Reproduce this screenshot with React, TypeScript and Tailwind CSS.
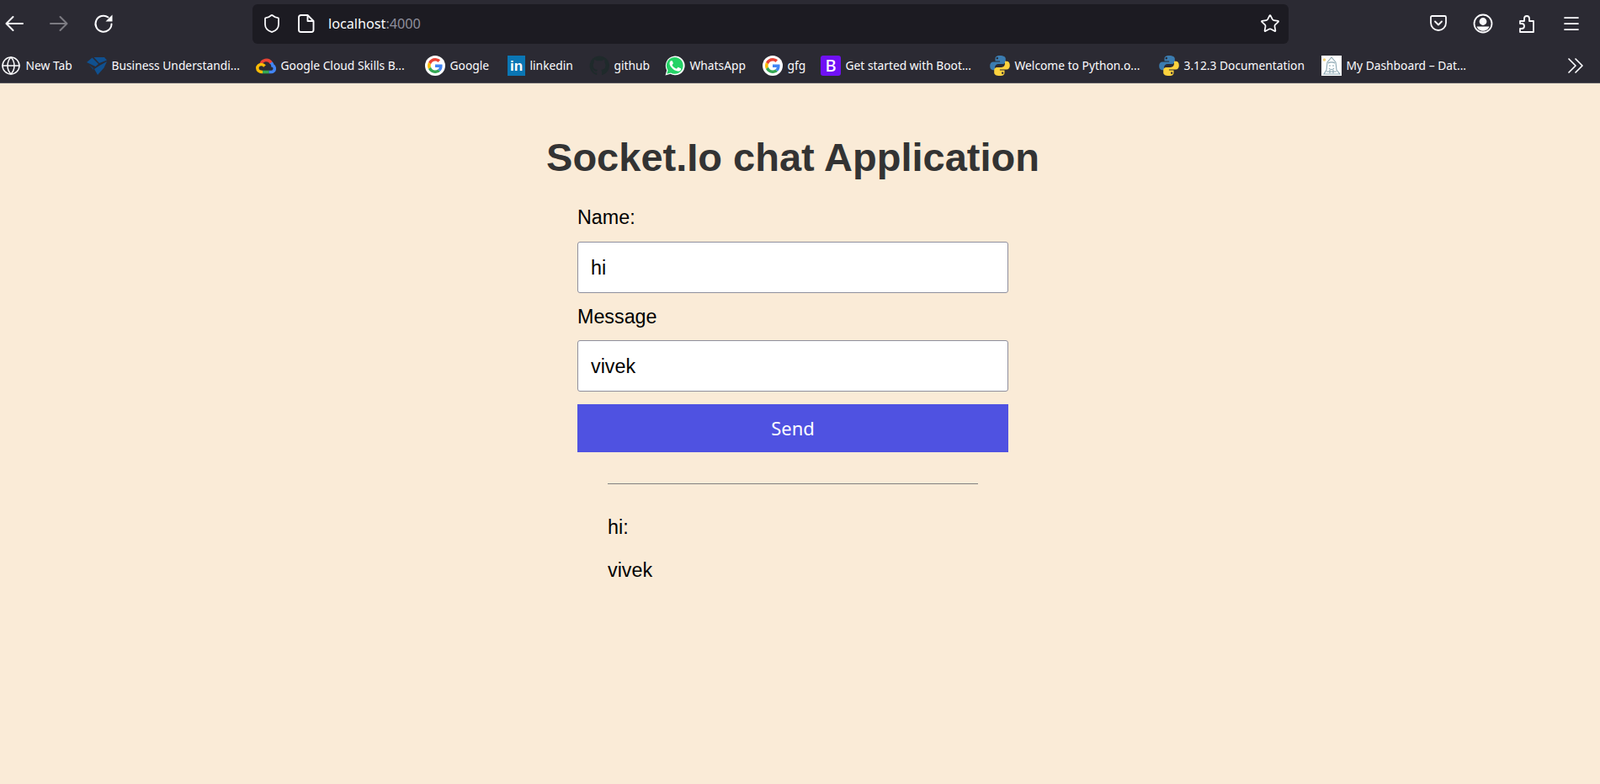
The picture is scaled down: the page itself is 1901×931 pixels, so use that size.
import React from 'react';
import { Shield, Star, Menu, Globe } from 'lucide-react';

const GoogleIcon = () => (
  <div className="w-6 h-6 rounded-full bg-white flex items-center justify-center">
    <svg viewBox="0 0 48 48" className="w-[18px] h-[18px]">
      <path fill="#EA4335" d="M24 9.5c3.5 0 6.7 1.2 9.2 3.6l6.9-6.9C35.9 2.4 30.5 0 24 0 14.6 0 6.5 5.4 2.6 13.2l8 6.2C12.5 13.7 17.8 9.5 24 9.5z" />
      <path fill="#4285F4" d="M46.9 24.5c0-1.6-.1-3.1-.4-4.5H24v9h12.9c-.6 3-2.2 5.5-4.8 7.2l7.7 6c4.5-4.2 7.1-10.300 7.1-17.700z" />
      <path fill="#FBBC05" d="M10.500 28.600c-.5-1.400-.8-3-.8-4.600s.3-3.200.8-4.600l-8-6.200C.9 16.500 0 20.100 0 24s.9 7.500 2.600 10.800l7.900-6.200z" />
      <path fill="#34A853" d="M24 48c6.500 0 11.900-2.100 15.900-5.800l-7.700-6c-2.200 1.500-5 2.300-8.200 2.300-6.200 0-11.500-4.200-13.400-9.900l-8 6.200C6.500 42.600 14.600 48 24 48z" />
    </svg>
  </div>
);

const PythonIcon = () => (
  <svg viewBox="0 0 24 24" className="w-6 h-6">
    <path fill="#3b7cb0" d="M11.800 0C7.700 0 6.500 1.700 6.500 3.800V6.600h5.600v1H4C1.800 7.600.2 9.200.2 12.300c0 3.300 1.500 4.900 3.600 4.900h2.200v-3c0-2.300 1.900-4.100 4.200-4.100h5.400c1.800 0 3.200-1.500 3.200-3.300V3.800C18.800 1.700 16.900 0 11.800 0zM8.800 2c.7 0 1.200.5 1.200 1.200S9.500 4.400 8.800 4.400 7.600 3.900 7.600 3.200 8.100 2 8.800 2z" />
    <path fill="#fdd23e" d="M12.200 24c4.100 0 5.300-1.700 5.300-3.800v-2.800h-5.600v-1H20c2.200 0 3.800-1.600 3.800-4.700 0-3.300-1.500-4.900-3.600-4.900H18v3c0 2.300-1.900 4.100-4.200 4.100H8.400c-1.800 0-3.200 1.500-3.200 3.300v3c0 2.100 1.900 3.800 7 3.800zm3-2c-.7 0-1.200-.5-1.200-1.200s.5-1.200 1.200-1.200 1.200.5 1.200 1.200-.5 1.200-1.200 1.200z" />
  </svg>
);

const bookmarks = [
  {
    label: 'New Tab',
    box: 'w-[103px] pl-[1px]',
    icon: <Globe size={24} strokeWidth={1.5} className="text-[#fbfbfe]" />,
  },
  {
    label: 'Business Understandi...',
    box: 'w-[201px]',
    icon: (
      <svg viewBox="0 0 24 24" className="w-6 h-6">
        <path fill="#10508f" d="M0 8l6.500-5.500L14 10l-3.500 3z" />
        <path fill="#10508f" d="M8.500 2H21l3 3.500L15 9z" />
        <path fill="#10508f" d="M24 7l-3.500 7.500L13 23l-4-7 6-4z" />
        <path fill="#0d4478" d="M2.500 11l5 3.500 1 3z" />
      </svg>
    ),
  },
  {
    label: 'Google Cloud Skills B...',
    box: 'w-[201px]',
    icon: (
      <svg viewBox="0 0 24 24" className="w-6 h-6" fill="none" strokeWidth="3.6">
        <path stroke="#4285f4" d="M17 7.500c2 1.500 3 3.500 3 4.500 2 .5 2.300 2.500 2.300 3.500 0 2.500-2 4-4 4h-3" />
        <path stroke="#ea4335" d="M6 11a6.500 6.500 0 0 1 12-2.500" />
        <path stroke="#34a853" d="M15.500 19.500H8" />
        <path stroke="#fbbc05" d="M8 19.500c-3.500 0-6.200-2-6.200-4.500s2.200-4.500 4.700-4.500c1.500 0 3 .8 4 2" />
      </svg>
    ),
  },
  { label: 'Google', box: 'w-[98px]', icon: <GoogleIcon /> },
  {
    label: 'linkedin',
    box: 'w-[97px]',
    icon: (
      <div className="w-[21px] h-6 bg-[#0a76b4] border-2 border-[#0a76b4] flex items-center justify-center">
        <span className="text-white font-bold text-[17px] leading-none font-['Liberation_Sans',sans-serif]">in</span>
      </div>
    ),
  },
  {
    label: 'github',
    box: 'w-[90px]',
    icon: (
      <svg viewBox="0 0 24 24" className="w-6 h-6">
        <path fill="#1f2a2b" d="M12 .5A11.500 11.500 0 0 0 8.400 22.900c.6.100.8-.2.800-.6v-2c-3.200.7-3.900-1.500-3.900-1.500-.5-1.300-1.300-1.700-1.300-1.700-1-.7.100-.7.100-.7 1.200.1 1.800 1.200 1.800 1.200 1 1.800 2.700 1.300 3.400 1 .1-.8.400-1.300.7-1.600-2.600-.3-5.300-1.300-5.300-5.700 0-1.300.5-2.300 1.200-3.100-.1-.3-.5-1.500.1-3.100 0 0 1-.3 3.200 1.200a11 11 0 0 1 5.800 0c2.200-1.500 3.200-1.200 3.200-1.200.6 1.600.2 2.800.1 3.100.8.800 1.200 1.900 1.200 3.100 0 4.400-2.700 5.400-5.300 5.700.4.400.8 1.100.8 2.200v3.200c0 .3.200.7.800.6A11.500 11.500 0 0 0 12 .5z" />
      </svg>
    ),
  },
  {
    label: 'WhatsApp',
    box: 'w-[116px]',
    icon: (
      <svg viewBox="0 0 24 24" className="w-6 h-6">
        <path fill="#fff" d="M.5 23.500l1.700-6.100A11.400 11.400 0 1 1 6.500 21.800z" />
        <path fill="#25d366" d="M2.300 21.700l1.200-4.400A9.900 9.900 0 1 1 7 20.500z" />
        <path fill="#fff" d="M9 6.800c-.3-.6-.5-.6-.8-.6h-.6c-.3 0-.6.100-.9.400-.3.400-1.200 1.200-1.200 2.800s1.200 3.200 1.300 3.400c.2.200 2.300 3.700 5.800 5 2.900 1.100 3.400.9 4 .8.600-.1 2-.8 2.300-1.600.3-.8.300-1.400.2-1.600-.1-.1-.3-.2-.7-.4l-2.300-1.100c-.3-.1-.5-.2-.8.200l-1.100 1.300c-.2.200-.4.300-.8.100-.4-.2-1.500-.6-2.800-1.700-1-.9-1.700-2-1.900-2.400-.2-.3 0-.5.200-.7l.5-.6c.2-.2.200-.3.400-.6.100-.2.100-.4 0-.6L9 6.800z" />
      </svg>
    ),
  },
  { label: 'gfg', box: 'w-[69px]', icon: <GoogleIcon /> },
  {
    label: 'Get started with Boot...',
    box: 'w-[201px]',
    icon: (
      <div className="w-6 h-6 rounded-[3px] bg-[#7011f5] flex items-center justify-center">
        <span className="text-white font-medium text-[20px] leading-none font-['Noto_Sans',sans-serif]">B</span>
      </div>
    ),
  },
  { label: 'Welcome to Python.o...', box: 'w-[201px]', icon: <PythonIcon /> },
  { label: '3.12.3 Documentation', box: 'w-[193px]', icon: <PythonIcon /> },
  {
    label: 'My Dashboard – Dat...',
    box: 'flex-1',
    icon: (
      <svg viewBox="0 0 24 24" className="w-6 h-6 bg-white" fill="none" stroke="#8aa6b2" strokeWidth="1.1">
        <path d="M12 2l5 6 1 9 4 5H3l3-5 1-9z" />
        <path d="M8 9c2-1.500 6-1.500 8 0M9 12h2M13 12h2M9 15c1 2 5 2 6 0M10 17v4M14 17v4M6 19h12" />
        <circle cx="3.500" cy="5" r="1.800" fill="#f3d27a" stroke="none" />
      </svg>
    ),
  },
];

export default function App() {
  return (
    <div className="h-[931px] overflow-hidden bg-[#faebd7] font-['Liberation_Sans',Arial,sans-serif]">
      <div className="h-[99px] border-b border-[#55545c] bg-[#2b2a33] text-[#fbfbfe] font-['Noto_Sans',sans-serif]">
        <div className="flex items-center h-[55px]">
          <div className="flex items-center w-[300px] pl-[5px] gap-[29px]">
            <svg viewBox="0 0 24 24" className="w-6 h-6" fill="none" stroke="currentColor" strokeWidth="2" strokeLinecap="round" strokeLinejoin="round">
              <path d="M3 12h19M10.500 4L2.500 12l8 8" />
            </svg>
            <svg viewBox="0 0 24 24" className="w-6 h-6 text-[#7c7b82]" fill="none" stroke="currentColor" strokeWidth="2" strokeLinecap="round" strokeLinejoin="round">
              <path d="M21 12H2M13.500 4l8 8-8 8" />
            </svg>
            <svg viewBox="0 0 24 24" className="w-6 h-6" fill="none" stroke="currentColor" strokeWidth="2" strokeLinecap="round">
              <path d="M21.500 12.500a9.500 9.500 0 1 1-4-8" />
              <path d="M22.500 1.500v8h-8z" fill="currentColor" stroke="none" />
            </svg>
          </div>
          <div className="flex items-center w-[1231px] h-[47px] mt-[1px] pl-[11px] pr-[10px] rounded-[6px] bg-[#1c1b22]">
            <Shield size={24} strokeWidth={1.75} />
            <svg viewBox="0 0 24 24" className="w-6 h-6 ml-[17px]" fill="none" stroke="currentColor" strokeWidth="1.9" strokeLinejoin="round">
              <path d="M5.500 2h8l7 7v10.500a2.500 2.500 0 0 1-2.500 2.500H5.500A2.500 2.500 0 0 1 3 19.500v-15A2.500 2.500 0 0 1 5.500 2z" />
              <path d="M13.500 2v7h7" />
            </svg>
            <span className="ml-[14px] text-[16.2px]">
              localhost<span className="text-[#8f8f9d]">:4000</span>
            </span>
            <Star size={24} strokeWidth={1.75} className="ml-auto" />
          </div>
          <div className="flex items-center ml-[166px] gap-[28.5px]">
            <svg viewBox="0 0 24 24" className="w-6 h-6" fill="none" stroke="currentColor" strokeWidth="1.8" strokeLinejoin="round" strokeLinecap="round">
              <path d="M4.500 3h15A1.500 1.500 0 0 1 21 4.500V11a9 9 0 0 1-18 0V4.500A1.500 1.500 0 0 1 4.500 3z" />
              <path d="M8 9.500l4 4 4-4" />
            </svg>
            <svg viewBox="0 0 24 24" className="w-6 h-6" fill="none" stroke="currentColor" strokeWidth="1.8">
              <circle cx="12" cy="12" r="10.500" />
              <circle cx="12" cy="9.500" r="3.500" fill="currentColor" />
              <path d="M6 16.500h12a7 7 0 0 1-12 0z" fill="currentColor" />
            </svg>
            <svg viewBox="0 0 24 24" className="w-6 h-6" fill="none" stroke="currentColor" strokeWidth="1.8" strokeLinejoin="round">
              <path d="M4 9h5V6a3 3 0 0 1 6 0v3h5v13H4v-4h2a3 3 0 0 0 0-6H4z" />
            </svg>
            <Menu size={24} strokeWidth={1.75} />
          </div>
        </div>
        <div className="flex items-center h-[43px] pt-[3px] text-[13.8px] whitespace-nowrap">
          {bookmarks.map((b) => (
            <div key={b.label} className={`flex items-center gap-[5.5px] ${b.box}`}>
              {b.icon}
              <span>{b.label}</span>
            </div>
          ))}
          <svg viewBox="0 0 20 20" className="w-5 h-5 mr-[19px]" fill="none" stroke="currentColor" strokeWidth="1.7" strokeLinecap="round" strokeLinejoin="round">
            <path d="M2 2l8 8-8 8M10 2l8 8-8 8" />
          </svg>
        </div>
      </div>

      <div className="w-[1884px] flex flex-col items-center">
        <h1 className="mt-[60px] h-[56px] leading-[56px] text-[47px] font-bold text-[#333333]">Socket.Io chat Application</h1>
        <form className="w-[512px] mt-[16px]">
          <label className="block h-[27px] leading-[27px] text-[23.3px] mt-[14px] mb-[15px] text-black">Name:</label>
          <input
            readOnly
            value="hi"
            className="block w-full h-[61px] px-[15px] pt-[1px] bg-white border border-[#8f8f9d] rounded-[3px] text-[23.3px] text-black outline-none"
          />
          <label className="block h-[27px] leading-[27px] text-[23.3px] mt-[15px] mb-[14px] text-black">Message</label>
          <input
            readOnly
            value="vivek"
            className="block w-full h-[61px] px-[15px] pt-[1px] bg-white border border-[#8f8f9d] rounded-[3px] text-[23.3px] text-black outline-none"
          />
          <button
            type="button"
            className="block w-full h-[57px] mt-[15px] bg-[#4f52e1] text-white text-[22px] font-['Noto_Sans',sans-serif]"
          >
            Send
          </button>
        </form>
        <div className="w-[440px] mt-[37px] text-[23.3px] text-black">
          <hr className="border-t border-[#808080]" />
          <p className="mt-[38px] leading-[27px]">hi:</p>
          <p className="mt-[24px] leading-[27px]">vivek</p>
        </div>
      </div>
    </div>
  );
}
